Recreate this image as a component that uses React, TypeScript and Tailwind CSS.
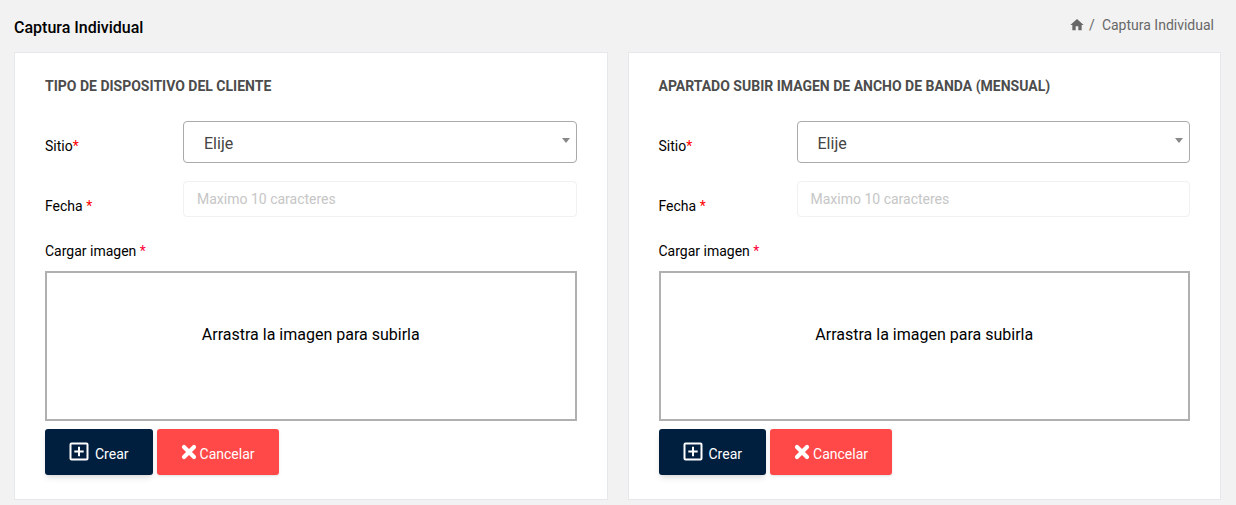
import { useId } from "react";
import { MdHome } from "react-icons/md";

function Required() {
  return <span className="text-[#ff0000]">*</span>;
}

function AddIcon() {
  return (
    <svg viewBox="0 0 20 20" className="size-5 fill-none stroke-current stroke-2" aria-hidden="true">
      <rect x="1.5" y="1.5" width="17" height="16" rx="1" />
      <path d="M10 4.8v9.4M5.3 9.5h9.4" />
    </svg>
  );
}

function CrossIcon() {
  return (
    <svg viewBox="0 0 16 16" className="size-4 fill-none stroke-current" aria-hidden="true">
      <path d="M3 3l10 10M13 3L3 13" strokeWidth="4.2" strokeLinecap="round" />
    </svg>
  );
}

function CaptureCard({ title }: { title: string }) {
  const id = useId();
  return (
    <section className="min-w-0 flex-1 border border-[#e6e9ec] bg-white px-[30px] pt-[23px] pb-6">
      <h2 className="text-sm leading-5 font-bold text-[#4c4c4c] uppercase">{title}</h2>
      <form className="mt-[25px] text-sm leading-5 text-black" onSubmit={(e) => e.preventDefault()}>
        <div className="flex items-start">
          <label htmlFor={`${id}-site`} className="w-[138px] shrink-0 pt-[15px]">
            Sitio
            <Required />
          </label>
          <div className="relative min-w-0 flex-1">
            <select
              id={`${id}-site`}
              className="block h-[42px] w-full appearance-none rounded border border-[#aaaaaa] bg-white pt-1 pr-8 pl-5 text-base text-[#444444]"
            >
              <option>Elije</option>
            </select>
            <svg
              viewBox="0 0 8 5"
              className="pointer-events-none absolute top-[17px] right-[7px] h-[5px] w-2 fill-[#888888]"
              aria-hidden="true"
            >
              <path d="M0 0h8L4 5z" />
            </svg>
          </div>
        </div>
        <div className="mt-[18px] flex items-start">
          <label htmlFor={`${id}-date`} className="w-[138px] shrink-0 pt-[15px]">
            Fecha <Required />
          </label>
          <input
            id={`${id}-date`}
            type="text"
            maxLength={10}
            placeholder="Maximo 10 caracteres"
            className="block h-9 min-w-0 flex-1 rounded-sm border border-[#f1f1f1] bg-white px-[13px] text-sm text-[#444444] placeholder:text-[#c6c6c6]"
          />
        </div>
        <label htmlFor={`${id}-image`} className="mt-6 block">
          Cargar imagen <span className="text-[#ff0038]">*</span>
        </label>
        <label className="mt-[10px] block h-[150px] cursor-pointer border-2 border-[#b0b0b0] pt-[50px] text-center text-base leading-6">
          Arrastra la imagen para subirla
          <input id={`${id}-image`} type="file" accept="image/*" className="sr-only" />
        </label>
        <div className="mt-2 flex gap-1 text-white">
          <button
            type="submit"
            className="flex h-[46px] items-center gap-[6px] rounded-[3px] bg-[#001f3f] px-6 shadow-md"
          >
            <AddIcon />
            <span className="pt-1">Crear</span>
          </button>
          <button
            type="button"
            className="flex h-[46px] items-center gap-[3px] rounded-[3px] bg-[#ff4848] px-6 shadow-sm"
          >
            <CrossIcon />
            <span className="pt-1">Cancelar</span>
          </button>
        </div>
      </form>
    </section>
  );
}

export default function App() {
  return (
    <main className="min-h-screen bg-[#f2f2f2] px-[14px] font-['Roboto',sans-serif]">
      <header className="flex h-[52px] items-center justify-between pr-2">
        <h1 className="pt-1 text-base leading-6 font-medium text-black">Captura Individual</h1>
        <nav aria-label="Breadcrumb" className="flex items-center pb-[2px] text-sm leading-5 text-[#686868]">
          <a href="#" aria-label="Inicio">
            <MdHome className="size-4" />
          </a>
          <span className="pr-[7px] pl-1">/</span>
          <span>Captura Individual</span>
        </nav>
      </header>
      <div className="flex gap-5 pr-px">
        <CaptureCard title="Tipo de dispositivo del cliente" />
        <CaptureCard title="Apartado subir imagen de ancho de banda (mensual)" />
      </div>
    </main>
  );
}
